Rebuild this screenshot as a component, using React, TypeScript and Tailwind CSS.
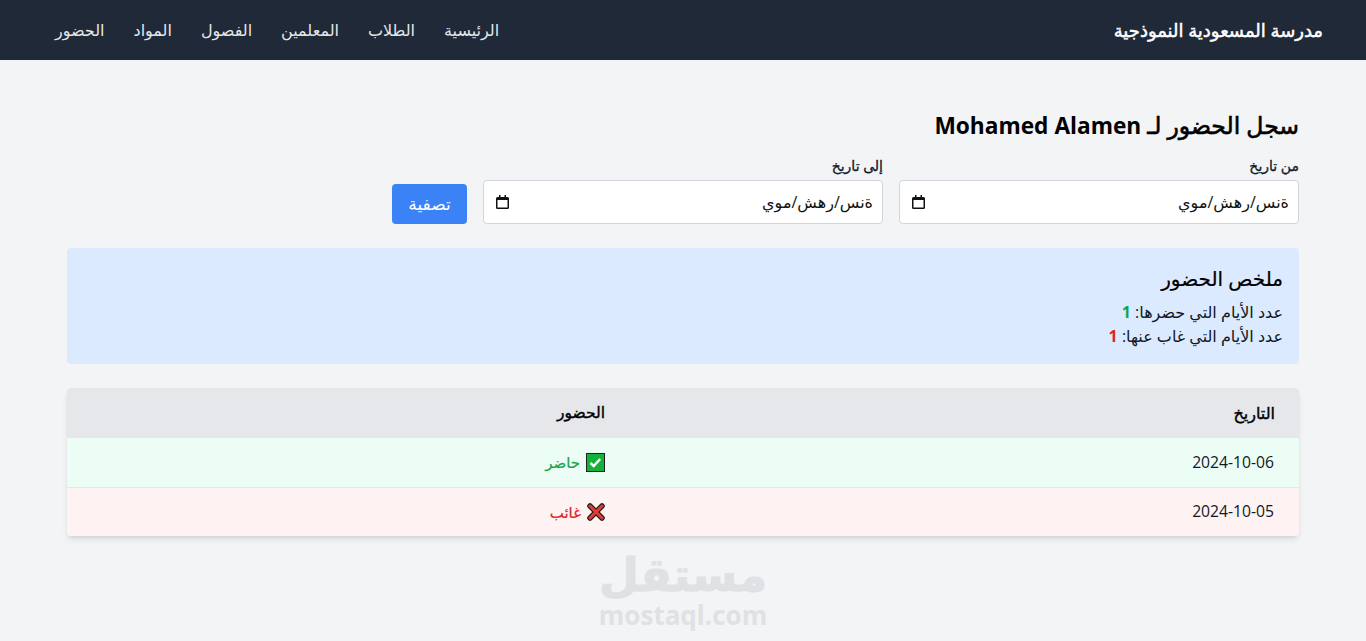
const font = "font-['Open_Sans','DejaVu_Sans',sans-serif]";

const links = ["الرئيسية", "الطلاب", "المعلمين", "الفصول", "المواد", "الحضور"];

function CalendarIcon() {
  return (
    <svg width="13" height="14" viewBox="0 0 13 14" className="shrink-0">
      <path d="M3 0h1.500v2h4V0H10v2h1.500A1.500 1.500 0 0 1 13 3.500v9a1.500 1.500 0 0 1-1.500 1.500h-10A1.500 1.500 0 0 1 0 12.500v-9A1.500 1.500 0 0 1 1.500 2H3z" fill="#111" />
      <rect x="1.500" y="5" width="10" height="7.500" fill="#fff" />
    </svg>
  );
}

function DateField({ label }: { label: string }) {
  return (
    <div className="w-[400px]">
      <label className="mb-[4px] block h-[20px] text-[14px] leading-[20px] text-[#111827] [-webkit-text-stroke:0.3px]">{label}</label>
      <div className="flex h-[44px] items-center justify-between rounded-[4px] border border-[#d1d5db] bg-white pr-[9px] pl-[12px]">
        <span className="flex text-[16px] text-[#111]">
          <span>ةنس</span>
          <span>/</span>
          <span>رهش</span>
          <span>/</span>
          <span>موي</span>
        </span>
        <CalendarIcon />
      </div>
    </div>
  );
}

function CheckEmoji() {
  return (
    <svg width="19" height="19" viewBox="0 0 19 19" className="shrink-0">
      <rect x="0.500" y="0.500" width="18" height="18" fill="#16b13a" stroke="#222" />
      <path d="M4.500 10l3.200 3 6.500-7" fill="none" stroke="#fff" strokeWidth="2.400" />
    </svg>
  );
}

function CrossEmoji() {
  return (
    <svg width="18" height="18" viewBox="0 0 18 18" className="shrink-0">
      <path d="M3 3l12 12M15 3L3 15" stroke="#222" strokeWidth="5.500" strokeLinecap="round" />
      <path d="M3 3l12 12M15 3L3 15" stroke="#e53935" strokeWidth="3" strokeLinecap="round" />
    </svg>
  );
}

export default function App() {
  return (
    <div dir="rtl" className={`relative h-[641px] overflow-hidden bg-[#f3f4f6] text-black ${font}`}>
      <nav className="h-[60px] bg-[#1f2937] text-white">
        <div className="mx-auto flex h-full w-[1280px] items-center justify-between">
          <div className="text-[18px] [-webkit-text-stroke:0.5px]">مدرسة المسعودية النموذجية</div>
          <ul className="-ml-[2.500px] flex">
            {links.map((l) => (
              <li key={l} className="px-[14.500px] text-[16px] text-[#e5e7eb]">{l}</li>
            ))}
          </ul>
        </div>
      </nav>

      <main className="mx-auto w-[1280px] px-6 pt-[47px]">
        <h1 className="mb-[13px] h-[36px] text-[23.500px] leading-[36px] [-webkit-text-stroke:0.6px]">
          سجل الحضور لـ <span className="text-[22.700px] font-bold [-webkit-text-stroke:0px]">Mohamed Alamen</span>
        </h1>

        <div className="mb-[24px] flex items-end gap-4">
          <DateField label="من تاريخ" />
          <DateField label="إلى تاريخ" />
          <button className="h-[40px] w-[75px] rounded-[4px] bg-[#3b82f6] text-[17px] text-white">تصفية</button>
        </div>

        <div className="mb-[24px] h-[116px] rounded-[4px] bg-[#dbeafe] p-4">
          <h2 className="mb-[8px] h-[28px] pt-[1px] text-[20px] leading-[28px] [-webkit-text-stroke:0.2px]">ملخص الحضور</h2>
          <p className="h-[24px] text-[16px] leading-[24px] text-[#111827]">
            عدد الأيام التي حضرها: <span className="font-bold text-[#16a34a]">1</span>
          </p>
          <p className="h-[24px] text-[16px] leading-[24px] text-[#111827]">
            عدد الأيام التي غاب عنها: <span className="font-bold text-[#dc2626]">1</span>
          </p>
        </div>

        <div className="overflow-hidden rounded-[4px] shadow-md">
          <table className="w-full border-collapse text-right">
            <thead className="bg-[#e5e7eb]">
              <tr className="h-[50px]">
                <th className="w-[670px] px-6 text-[16px] font-normal [-webkit-text-stroke:0.4px]">التاريخ</th>
                <th className="px-6 text-[15.500px] font-normal [-webkit-text-stroke:0.4px]">الحضور</th>
              </tr>
            </thead>
            <tbody className="text-[15px]">
              <tr className="h-[49px] bg-[#ecfdf5]">
                <td className="px-6 pt-[2px] pr-[25px] text-[15.700px] text-[#111827]">2024-10-06</td>
                <td className="px-6 text-[#16a34a] [-webkit-text-stroke:0.2px]">
                  <span className="flex items-center gap-[6px]"><CheckEmoji />حاضر</span>
                </td>
              </tr>
              <tr className="h-[49px] border-t border-[#e5e7eb] bg-[#fef2f2]">
                <td className="px-6 pt-[1px] pr-[25px] text-[15.700px] text-[#111827]">2024-10-05</td>
                <td className="px-6 text-[#dc2626] [-webkit-text-stroke:0.2px]">
                  <span className="flex items-center gap-[6px]"><CrossEmoji />غائب</span>
                </td>
              </tr>
            </tbody>
          </table>
        </div>
      </main>

      {/* watermark */}
      <div className="pointer-events-none absolute top-[548px] left-[600px] flex w-[166px] flex-col items-center text-[#dfe1e4]">
        <span className="h-[50px] text-[46px] leading-[50px] font-bold [-webkit-text-stroke:1px]">مستقل</span>
        <span dir="ltr" className="mt-[2px] h-[30px] text-[26px] leading-[30px] font-bold">mostaql.com</span>
      </div>
    </div>
  );
}
